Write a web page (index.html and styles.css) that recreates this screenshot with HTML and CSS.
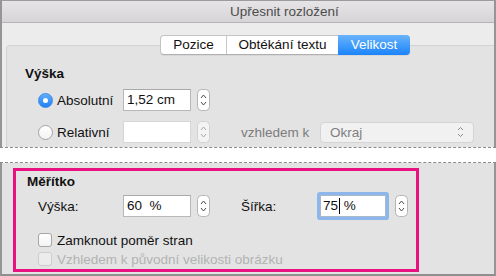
FILE: index.html
```html
<!DOCTYPE html>
<html>
<head>
    <title>Upřesnit rozložení</title>
    <link rel="stylesheet" href="styles.css">
</head>
<body>
    <div class="top">
        <div class="titlebar">Upřesnit rozložení</div>
        <div class="content">
            <div class="tabs-row">
                <div class="tabs">
                    <div class="tab tab-pozice">Pozice</div>
                    <div class="tab tab-obtekani">Obtékání textu</div>
                    <div class="tab tab-velikost active">Velikost</div>
                </div>
            </div>
            <div class="groupbox">
                <div class="heading">Výška</div>
                <div class="row row-first">
                    <div class="choice"><span class="radio checked"></span>Absolutní</div>
                    <div class="field">1,52 cm</div>
                    <svg class="stepper" width="13" height="22" viewBox="0 0 13 22">
                        <rect x="0.5" y="0.5" width="12" height="21" rx="4" fill="#fff" stroke="#b4b4b4"/>
                        <path d="M4 9 L6.5 6 L9 9 M4 13 L6.5 16 L9 13" fill="none" stroke="#4a4a4a" stroke-width="1"/>
                    </svg>
                </div>
                <div class="row row-second">
                    <div class="choice"><span class="radio"></span>Relativní</div>
                    <div class="field disabled"></div>
                    <svg class="stepper" width="13" height="22" viewBox="0 0 13 22">
                        <rect x="0.5" y="0.5" width="12" height="21" rx="4" fill="#f4f4f4" stroke="#d2d2d2"/>
                        <path d="M4 9 L6.5 6 L9 9 M4 13 L6.5 16 L9 13" fill="none" stroke="#a8a8a8" stroke-width="1"/>
                    </svg>
                    <div class="relative-label">vzhledem k</div>
                    <div class="select">
                        <span>Okraj</span>
                        <svg width="9" height="14" viewBox="0 0 9 14">
                            <path d="M2 5 L4.5 2.5 L7 5 M2 9 L4.5 11.5 L7 9" fill="none" stroke="#8a8a8a" stroke-width="1"/>
                        </svg>
                    </div>
                </div>
            </div>
        </div>
    </div>
    <div class="cut"></div>
    <div class="bottom">
        <div class="highlight">
            <div class="heading">Měřítko</div>
            <div class="row scale-row">
                <div class="scale-label">Výška:</div>
                <div class="field pre">60  %</div>
                <svg class="stepper" width="13" height="22" viewBox="0 0 13 22">
                    <rect x="0.5" y="0.5" width="12" height="21" rx="4" fill="#fff" stroke="#b4b4b4"/>
                    <path d="M4 9 L6.5 6 L9 9 M4 13 L6.5 16 L9 13" fill="none" stroke="#4a4a4a" stroke-width="1"/>
                </svg>
                <div class="scale-label width-label">Šířka:</div>
                <div class="field focused pre"><span class="caret">75</span> %</div>
                <svg class="stepper stepper-wide" width="13" height="22" viewBox="0 0 13 22">
                    <rect x="0.5" y="0.5" width="12" height="21" rx="4" fill="#fff" stroke="#b4b4b4"/>
                    <path d="M4 9 L6.5 6 L9 9 M4 13 L6.5 16 L9 13" fill="none" stroke="#4a4a4a" stroke-width="1"/>
                </svg>
            </div>
            <div class="check-row check-first"><span class="checkbox"></span>Zamknout poměr stran</div>
            <div class="check-row check-second disabled-text"><span class="checkbox disabled"></span>Vzhledem k původní velikosti obrázku</div>
        </div>
    </div>
</body>
</html>
```

FILE: styles.css
```css
body {
    margin: 0;
    width: 496px;
    height: 276px;
    overflow: hidden;
    font-family: "Liberation Sans", Arial, sans-serif;
    font-size: 13.5px;
    color: #111;
    background: #fff;
}

.top {
    height: 147px;
    box-sizing: border-box;
    border-top: 1px solid #9c9c9c;
    border-left: 2px solid #959595;
    border-right: 2px solid #959595;
    overflow: hidden;
    background: #ececec;
}

.titlebar {
    height: 21px;
    line-height: 21px;
    padding-left: 228px;
    color: #4c4c4c;
    background: linear-gradient(#e6e4e6, #d6d4d6);
    border-bottom: 1px solid #b4b4b4;
}

.content {
    padding-top: 12px;
}

.tabs-row {
    display: flex;
    padding-left: 158px;
    position: relative;
    z-index: 1;
}

.tabs {
    display: flex;
    height: 20px;
    box-sizing: border-box;
    border: 1px solid #c4c4c4;
    border-bottom-color: #b0b0b0;
    border-radius: 4px;
    background: #fff;
    box-shadow: 0 1px 0 rgba(0, 0, 0, 0.05);
}

.tab {
    line-height: 18px;
    text-align: center;
    color: #111;
}

.tab-pozice {
    width: 65px;
}

.tab-obtekani {
    width: 111px;
    border-left: 1px solid #c8c8c8;
}

.tab-velikost {
    width: 72px;
    margin: -1px -1px -1px 0;
    line-height: 20px;
    border-radius: 0 4px 4px 0;
    color: #fff;
    background: linear-gradient(#6ab3fb, #1b84fa);
}

.groupbox {
    margin: -10px -6px 0 4px;
    height: 102px;
    box-sizing: border-box;
    padding: 20px 0 0 18px;
    border: 1px solid #d3d3d3;
    border-bottom: none;
    border-radius: 4px 4px 0 0;
    background: #e3e3e3;
}

.heading {
    font-weight: bold;
    line-height: 16px;
}

.row {
    display: flex;
    align-items: center;
    height: 22px;
    padding-left: 13px;
}

.row-first {
    margin-top: 7px;
}

.row-second {
    margin-top: 10px;
}

.choice {
    display: flex;
    align-items: center;
    width: 85px;
}

.radio {
    width: 15px;
    height: 15px;
    box-sizing: border-box;
    margin-right: 4px;
    border-radius: 50%;
    border: 1px solid #a3a3a3;
    background: linear-gradient(#fff, #f3f3f3);
    display: flex;
    align-items: center;
    justify-content: center;
}

.radio.checked {
    border-color: #3a8ae8;
    background: linear-gradient(#64adf9, #1f80f4);
}

.radio.checked::after {
    content: "";
    width: 5px;
    height: 5px;
    border-radius: 50%;
    background: #fff;
}

.field {
    width: 68px;
    height: 22px;
    box-sizing: border-box;
    padding-left: 3px;
    line-height: 20px;
    border: 1px solid #b8b8b8;
    border-top-color: #a9a9a9;
    background: #fff;
}

.field.disabled {
    border-color: #d6d6d6;
}

.pre {
    white-space: pre;
}

.stepper {
    margin-left: 6px;
    flex-shrink: 0;
}

.relative-label {
    width: 79px;
    margin-left: 31px;
    color: #7c7c7c;
}

.select {
    display: flex;
    align-items: center;
    justify-content: space-between;
    width: 154px;
    height: 21px;
    box-sizing: border-box;
    padding: 0 8px 0 9px;
    border: 1px solid #d4d4d4;
    border-radius: 4px;
    background: #f1f1f1;
    color: #7f7f7f;
}

.cut {
    height: 16px;
    box-sizing: border-box;
    border-top: 1px dashed #8a8a8a;
    border-bottom: 1px dashed #8a8a8a;
    background: #fff;
}

.bottom {
    height: 113px;
    box-sizing: border-box;
    padding: 5px 0 0 11px;
    border-left: 2px solid #959595;
    border-right: 2px solid #959595;
    border-bottom: 2px solid #8e8e8e;
    background: #e3e3e3;
}

.highlight {
    width: 406px;
    height: 104px;
    box-sizing: border-box;
    padding: 3px 0 0 11px;
    border: 3px solid #e8117f;
}

.scale-row {
    margin-top: 5px;
    padding-left: 11px;
}

.scale-label {
    width: 85px;
}

.width-label {
    width: 79px;
    margin-left: 31px;
}

.field.focused {
    width: 66px;
    padding-left: 2px;
    border-color: #a9b8cc;
    border-radius: 1px;
    box-shadow: 0 0 0 3px #8db6ea;
}

.caret {
    display: inline-block;
    line-height: 16px;
    border-right: 1px solid #000;
    padding-right: 1px;
}

.stepper-wide {
    margin-left: 9px;
}

.check-row {
    display: flex;
    align-items: center;
    height: 16px;
    padding-left: 11px;
}

.check-first {
    margin-top: 15px;
}

.check-second {
    margin-top: 3px;
}

.checkbox {
    width: 14px;
    height: 14px;
    box-sizing: border-box;
    margin-right: 5px;
    border: 1px solid #a5a5a5;
    border-radius: 3px;
    background: linear-gradient(#fff, #f4f4f4);
}

.checkbox.disabled {
    border-color: #cdcdcd;
    background: #ececec;
}

.disabled-text {
    color: #b3b3b3;
}
```
